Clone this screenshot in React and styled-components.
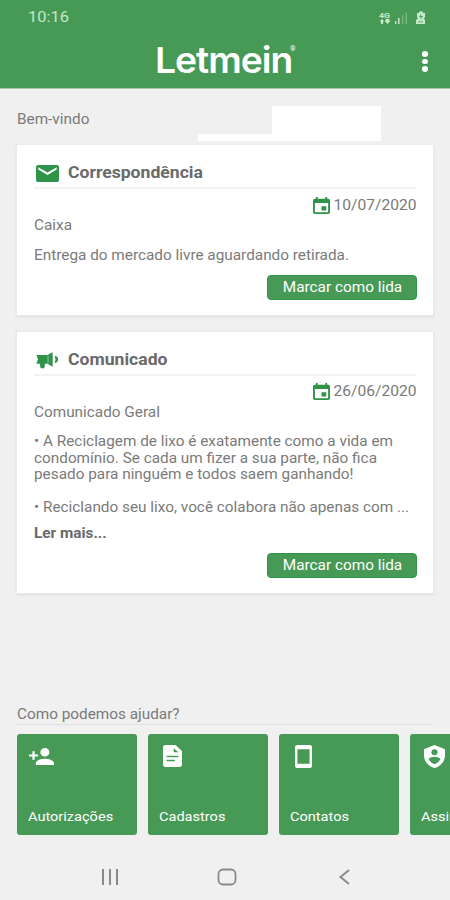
import styled, { createGlobalStyle } from "styled-components";

const GlobalStyle = createGlobalStyle`
  * {
    box-sizing: border-box;
  }

  body {
    margin: 0;
    background: #f0f0f0;
    font-family: Roboto, "Liberation Sans", sans-serif;
  }
`;

const cards = [
  {
    icon: "mail",
    title: "Correspondência",
    date: "10/07/2020",
    subject: "Caixa",
    lines: ["Entrega do mercado livre aguardando retirada."],
  },
  {
    icon: "megaphone",
    title: "Comunicado",
    date: "26/06/2020",
    subject: "Comunicado Geral",
    lines: [
      "• A Reciclagem de lixo é exatamente como a vida em",
      "condomínio. Se cada um fizer a sua parte, não fica",
      "pesado para ninguém e todos saem ganhando!",
      "",
      "• Reciclando seu lixo, você colabora não apenas com ...",
    ],
    more: "Ler mais...",
  },
];

const shortcuts = [
  { icon: "personAdd", label: "Autorizações" },
  { icon: "file", label: "Cadastros" },
  { icon: "phone", label: "Contatos" },
  { icon: "shield", label: "Assinaturas" },
];

function MailIcon() {
  return (
    <svg width="23" height="17" viewBox="0 0 20 16" preserveAspectRatio="none">
      <path
        fill="#2f934a"
        d="M18 0H2C.9 0 0 .9 0 2v12c0 1.100.9 2 2 2h16c1.100 0 2-.9 2-2V2c0-1.100-.9-2-2-2zm0 4.300-8 5-8-5V2l8 5 8-5v2.300z"
      />
    </svg>
  );
}

function MegaphoneIcon() {
  return (
    <svg width="22" height="18" viewBox="0 0 66 54">
      <path
        fill="#2f934a"
        d="M1 12H34L50 4V47L34 38H27L25 52H14L11 38H1L6 25ZM57 14Q67 16 66 25Q67 34 57 37Z"
      />
      <path fill="#fff" d="M57 20Q61 25 57 31Z" />
      <path stroke="#fff" strokeWidth="1.500" d="M36 13v24" />
    </svg>
  );
}

function CalendarIcon() {
  return (
    <svg width="17" height="17" viewBox="0 0 18 20" preserveAspectRatio="none">
      <path
        fill="#2f934a"
        d="M14 11H9v5h5v-5zM13 0v2H5V0H3v2H2C.9 2 0 2.900 0 4v14c0 1.100.9 2 2 2h14c1.100 0 2-.9 2-2V4c0-1.100-.9-2-2-2h-1V0h-2zm3 18H2V7h14v11z"
      />
    </svg>
  );
}

function PersonAddIcon() {
  return (
    <svg width="25" height="17" viewBox="0 0 22 16" preserveAspectRatio="none">
      <path
        fill="#fff"
        d="M14 8c2.210 0 4-1.790 4-4s-1.790-4-4-4-4 1.790-4 4 1.790 4 4 4zM5 6V3H3v3H0v2h3v3h2V8h3V6H5zm9 4c-2.670 0-8 1.340-8 4v2h16v-2c0-2.660-5.330-4-8-4z"
      />
    </svg>
  );
}

function FileIcon() {
  return (
    <svg width="19" height="22" viewBox="0 0 16 20" preserveAspectRatio="none">
      <path
        fill="#fff"
        d="M10.500 0H2C.9 0 0 .9 0 2v16c0 1.100.9 2 2 2h12c1.100 0 2-.9 2-2V5.500L10.500 0zM10 14.800H3v-1.300h7v1.300zm3-3.600H3V9.700h10v1.500zM9 6.500V3l4 3.500H9z"
      />
    </svg>
  );
}

function PhoneIcon() {
  return (
    <svg width="17" height="23" viewBox="0 0 14 22" preserveAspectRatio="none">
      <path
        fill="#fff"
        d="M12 0H2C.9 0 0 .9 0 2v18c0 1.100.9 2 2 2h10c1.100 0 2-.9 2-2V2c0-1.100-.9-2-2-2zm0 18H2V4h10v14z"
      />
    </svg>
  );
}

function ShieldIcon() {
  return (
    <svg width="21" height="23" viewBox="0 0 20 22" preserveAspectRatio="none">
      <path
        fill="#fff"
        d="M10 0 0 4v6c0 5.500 4.300 10.700 10 12 5.700-1.300 10-6.500 10-12V4L10 0z"
      />
      <circle cx="10" cy="7" r="2.900" fill="#479956" />
      <path fill="#479956" d="M4.300 13Q7 11.300 10 11.300T15.700 13Q14 17.300 10 18.300 6 17.300 4.300 13z" />
    </svg>
  );
}

const icons = {
  mail: MailIcon,
  megaphone: MegaphoneIcon,
  personAdd: PersonAddIcon,
  file: FileIcon,
  phone: PhoneIcon,
  shield: ShieldIcon,
};

function StatusIcons() {
  return (
    <svg width="48" height="14" viewBox="0 0 48 14" fill="#c9e9cb">
      <text x="0" y="6.500" fontSize="7.500" fontWeight="700" textLength="11" lengthAdjust="spacingAndGlyphs">
        4G
      </text>
      <path d="M3 8l2.500 2.500H4V13H2v-2.500H.5zM6.500 8h4v2h1L8.500 13 5.800 10h.7z" />
      <path d="M16 10h1.300v3H16zM19 7h1.500v6H19z" />
      <path opacity=".4" d="M23 4h1.300v9H23zM26.500 1.500H28V13h-1.500z" />
      <path d="M38 2h2V.5h4V2h2v4.500l-1.500 1L46 9v4h-9V9l2-1.500-1-1z" />
      <path fill="#479956" d="M42.500 2.500 40 6h2l-1 3 3-4h-2zM39 10.500h5v.8h-5z" />
    </svg>
  );
}

function Card({ data }) {
  const Icon = icons[data.icon];
  return (
    <Panel>
      <CardHeader>
        <IconSlot>
          <Icon />
        </IconSlot>
        <Title>{data.title}</Title>
      </CardHeader>
      <DateRow>
        <CalendarIcon />
        <DateText>{data.date}</DateText>
      </DateRow>
      <Subject>{data.subject}</Subject>
      <Message>
        {data.lines.map((line, i) => (
          <Line key={i}>{line}</Line>
        ))}
      </Message>
      {data.more && <More>{data.more}</More>}
      <ReadButton>
        <ButtonLabel>Marcar como lida</ButtonLabel>
      </ReadButton>
    </Panel>
  );
}

function App() {
  return (
    <Screen>
      <GlobalStyle />
      <Header>
        <StatusBar>
          <Clock>10:16</Clock>
          <StatusIcons />
        </StatusBar>
        <TitleBar>
          <Brand>
            <Logo>Letmein</Logo>
            <Mark>®</Mark>
          </Brand>
          <MenuButton aria-label="Menu">
            <Dot />
            <Dot />
            <Dot />
          </MenuButton>
        </TitleBar>
      </Header>

      <Greeting>
        <GreetingText>
          <Stretch>Bem-vindo</Stretch>
        </GreetingText>
        <Blank $width={74} $height={7} />
        <Blank $width={109} $height={35} />
      </Greeting>

      <CardList>
        {cards.map((card) => (
          <Card key={card.title} data={card} />
        ))}
      </CardList>

      <Help>
        <HelpTitle>
          <Stretch>Como podemos ajudar?</Stretch>
        </HelpTitle>
        <Tiles>
          {shortcuts.map(({ icon, label }) => {
            const Icon = icons[icon];
            return (
              <Tile key={label}>
                <TileIcon>
                  <Icon />
                </TileIcon>
                <TileLabel>{label}</TileLabel>
              </Tile>
            );
          })}
        </Tiles>
      </Help>

      <NavBar>
        <svg width="18" height="18" viewBox="0 0 18 18" stroke="#8a8a8a" strokeWidth="2">
          <path d="M2 1v16M9 1v16M16 1v16" />
        </svg>
        <svg width="20" height="18" viewBox="0 0 20 18" fill="none" stroke="#8a8a8a" strokeWidth="1.800">
          <rect x="1.500" y="1.500" width="17" height="15" rx="4.500" />
        </svg>
        <svg width="18" height="18" viewBox="0 0 18 18" fill="none" stroke="#8a8a8a" strokeWidth="2">
          <path d="M14 2 5.500 9l8.500 7" />
        </svg>
      </NavBar>
    </Screen>
  );
}

export default App;

const Screen = styled.div`
  display: flex;
  flex-direction: column;
  width: 450px;
  height: 900px;
  overflow: hidden;
  background: #f0f0f0;
  color: #7a7a7a;
  font-size: 14px;
  line-height: 16.5px;
`;

const Stretch = styled.span`
  display: inline-block;
  white-space: pre;
  transform: scaleX(1.095);
  transform-origin: left center;
`;

const Header = styled.header`
  flex: none;
  height: 89px;
  background: #479956;
  border-bottom: 1px solid #a5c9a9;
`;

const StatusBar = styled.div`
  display: flex;
  align-items: center;
  justify-content: space-between;
  height: 35px;
  padding: 0 23px 0 28px;
`;

const Clock = styled(Stretch)`
  color: #c4e8c6;
  font-size: 15px;
`;

const TitleBar = styled.div`
  display: flex;
  align-items: center;
  justify-content: space-between;
  height: 53px;
  padding: 0 22px 0 155px;
`;

const Brand = styled.div`
  display: flex;
  align-items: flex-start;
  height: 53px;
  color: #fff;
`;

const Logo = styled.div`
  width: 134px;
  font-family: Inter, sans-serif;
  font-size: 36px;
  font-weight: 600;
  line-height: 51px;
  letter-spacing: -1px;
  white-space: nowrap;
  transform: scaleX(1.035);
  transform-origin: left center;
`;

const Mark = styled.span`
  margin: 10px 0 0 1px;
  font-size: 7px;
  line-height: 9px;
`;

const MenuButton = styled.button`
  display: flex;
  flex-direction: column;
  gap: 2px;
  padding: 0;
  border: 0;
  background: none;
`;

const Dot = styled.i`
  width: 6px;
  height: 5.500px;
  border-radius: 50%;
  background: #fff;
`;

const Greeting = styled.div`
  display: flex;
  align-items: flex-end;
  height: 52px;
  padding-left: 17px;
`;

const GreetingText = styled.div`
  align-self: flex-start;
  width: 181px;
  margin-top: 22px;
`;

const Blank = styled.div`
  width: ${(p) => p.$width}px;
  height: ${(p) => p.$height}px;
  background: #fff;
`;

const CardList = styled.main`
  display: flex;
  flex-direction: column;
  gap: 17px;
  padding: 4px 17px 0;
`;

const Panel = styled.article`
  display: flex;
  flex-direction: column;
  padding: 0 17px 15px;
  background: #fff;
  box-shadow: 0 0 0 1px #e9eaea, 0 1px 2px 1px #dcdede;
`;

const CardHeader = styled.div`
  display: flex;
  align-items: center;
  height: 44px;
  padding-top: 15px;
  border-bottom: 2px solid #f2f2f2;
`;

const IconSlot = styled.span`
  display: flex;
  width: 34px;
  padding-left: 2px;
`;

const Title = styled(Stretch)`
  color: #6a6a6a;
  font-size: 16px;
  font-weight: 700;
  transform: scaleX(1.1);
`;

const DateRow = styled.div`
  display: flex;
  align-items: center;
  justify-content: flex-end;
  height: 18px;
  margin-top: 7px;
`;

const DateText = styled(Stretch)`
  margin-left: 12px;
  transform: scaleX(1.115);
  transform-origin: right center;
`;

const Subject = styled(Stretch)`
  align-self: flex-start;
  margin-top: 3px;
`;

const Message = styled.div`
  margin-top: 13px;
`;

const Line = styled(Stretch)`
  display: block;
  width: max-content;
  height: 16.500px;
`;

const More = styled(Stretch)`
  align-self: flex-start;
  margin-top: 9px;
  color: #6a6a6a;
  font-weight: 700;
`;

const ReadButton = styled.button`
  align-self: flex-end;
  width: 150px;
  height: 25px;
  margin: 11.500px -1px 0 0;
  padding: 0;
  border: 1px solid #2f934a;
  border-radius: 4px;
  background: #479956;
  color: #fff;
  font: 400 14px Roboto, sans-serif;
`;

const ButtonLabel = styled(Stretch)`
  transform: scaleX(1.095);
  transform-origin: center;
`;

const Help = styled.section`
  margin-top: auto;
  padding-left: 17px;
`;

const HelpTitle = styled.div`
  height: 19px;
  margin-right: 17px;
  border-bottom: 1px solid #e0e0e0;
`;

const Tiles = styled.div`
  display: flex;
  gap: 11px;
  margin-top: 9px;
  overflow: hidden;
`;

const Tile = styled.div`
  display: flex;
  flex: none;
  flex-direction: column;
  justify-content: space-between;
  width: 120px;
  height: 101px;
  padding: 10px 11px;
  border-radius: 3px;
  background: #479956;
`;

const TileIcon = styled.span`
  display: flex;
  align-items: center;
  justify-content: center;
  width: 26px;
  height: 24px;
`;

const TileLabel = styled(Stretch)`
  align-self: flex-start;
  color: #fff;
  font-size: 13px;
  transform: scaleX(1.12);
`;

const NavBar = styled.nav`
  display: flex;
  flex: none;
  align-items: center;
  justify-content: space-between;
  height: 65px;
  padding: 19px 97px 0 101px;
`;
